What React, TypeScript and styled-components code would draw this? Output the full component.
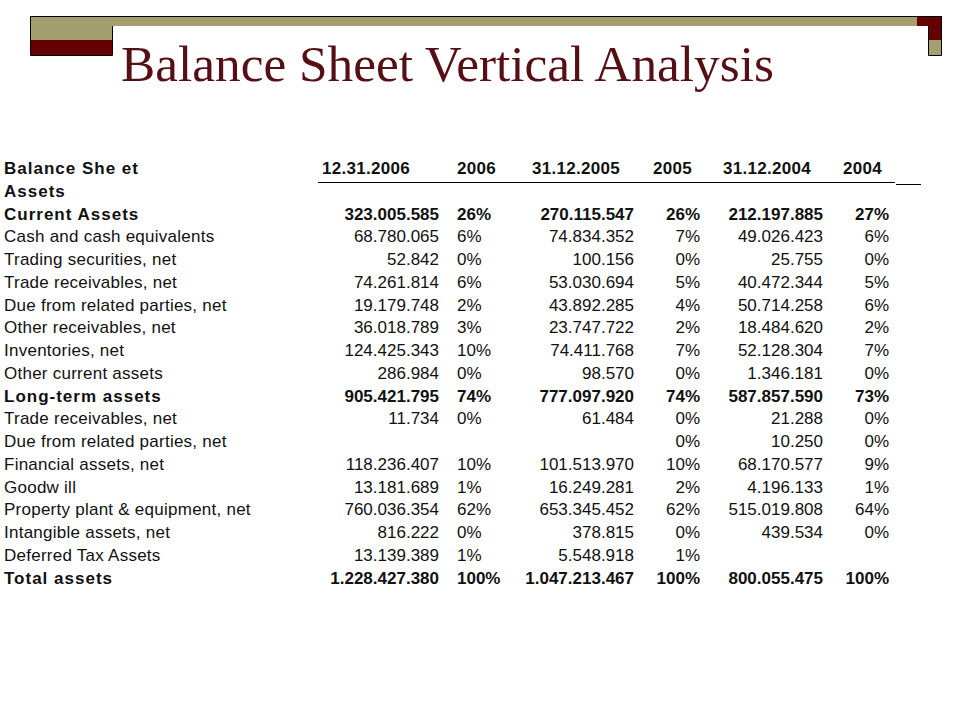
import React from "react";
import styled, { createGlobalStyle } from "styled-components";

const GlobalStyle = createGlobalStyle`
  html, body {
    margin: 0;
    padding: 0;
    background: #ffffff;
  }
`;

const ROW_H = 22.78;
const COLUMNS = "314px 121px 81px 114px 66px 123px 72px 26px";

const Slide = styled.div`
  width: 960px;
  height: 720px;
  background: #ffffff;
  overflow: hidden;
`;

const Header = styled.header`
  position: relative;
  height: 158px;
  box-sizing: border-box;
  padding: 37.5px 0 0 121px;
`;

const Decoration = styled.svg`
  position: absolute;
  top: 0;
  left: 0;
  pointer-events: none;
`;

const Title = styled.h1`
  position: relative;
  margin: 0;
  font-family: "Liberation Serif", "Times New Roman", serif;
  font-weight: normal;
  font-size: 51.3px;
  line-height: 1;
  color: #560f14;
  white-space: nowrap;
`;

const Table = styled.section`
  display: flex;
  flex-direction: column;
  margin-left: 4px;
  font-family: "Liberation Sans", Arial, sans-serif;
  font-size: 17px;
  color: #111111;
`;

const Row = styled.div<{ $bold?: boolean }>`
  display: grid;
  grid-template-columns: ${COLUMNS};
  height: ${ROW_H}px;
  line-height: ${ROW_H}px;
  font-weight: ${(p) => (p.$bold ? 700 : 400)};
  white-space: nowrap;
`;

const LabelCell = styled.span<{ $bold?: boolean }>`
  letter-spacing: ${(p) => (p.$bold ? "1px" : "0.25px")};
`;

const AmountCell = styled.span`
  text-align: right;
`;

const ShareCell = styled.span<{ $lead?: boolean; $tail?: boolean }>`
  text-align: ${(p) => (p.$lead ? "left" : "right")};
  padding-left: ${(p) => (p.$lead ? "18px" : "0")};
  padding-right: ${(p) => (p.$tail ? "6px" : "0")};
`;

const HeadCell = styled.span<{ $inset: number }>`
  box-sizing: border-box;
  height: calc(100% + 1px);
  padding-left: ${(p) => p.$inset}px;
  border-bottom: 1px solid #000000;
  letter-spacing: 0.3px;
`;

const HeadTick = styled.span`
  box-sizing: border-box;
  height: calc(100% + 3px);
  margin-left: 1px;
  border-bottom: 1px solid #000000;
`;

type Line = {
  label: string;
  bold?: boolean;
  values?: [string, string, string, string, string, string];
};

const lines: Line[] = [
  { label: "Assets", bold: true },
  { label: "Current Assets", bold: true, values: ["323.005.585", "26%", "270.115.547", "26%", "212.197.885", "27%"] },
  { label: "Cash and cash equivalents", values: ["68.780.065", "6%", "74.834.352", "7%", "49.026.423", "6%"] },
  { label: "Trading securities, net", values: ["52.842", "0%", "100.156", "0%", "25.755", "0%"] },
  { label: "Trade receivables, net", values: ["74.261.814", "6%", "53.030.694", "5%", "40.472.344", "5%"] },
  { label: "Due from related parties, net", values: ["19.179.748", "2%", "43.892.285", "4%", "50.714.258", "6%"] },
  { label: "Other receivables, net", values: ["36.018.789", "3%", "23.747.722", "2%", "18.484.620", "2%"] },
  { label: "Inventories, net", values: ["124.425.343", "10%", "74.411.768", "7%", "52.128.304", "7%"] },
  { label: "Other current assets", values: ["286.984", "0%", "98.570", "0%", "1.346.181", "0%"] },
  { label: "Long-term assets", bold: true, values: ["905.421.795", "74%", "777.097.920", "74%", "587.857.590", "73%"] },
  { label: "Trade receivables, net", values: ["11.734", "0%", "61.484", "0%", "21.288", "0%"] },
  { label: "Due from related parties, net", values: ["", "", "", "0%", "10.250", "0%"] },
  { label: "Financial assets, net", values: ["118.236.407", "10%", "101.513.970", "10%", "68.170.577", "9%"] },
  { label: "Goodw ill", values: ["13.181.689", "1%", "16.249.281", "2%", "4.196.133", "1%"] },
  { label: "Property plant & equipment, net", values: ["760.036.354", "62%", "653.345.452", "62%", "515.019.808", "64%"] },
  { label: "Intangible assets, net", values: ["816.222", "0%", "378.815", "0%", "439.534", "0%"] },
  { label: "Deferred Tax Assets", values: ["13.139.389", "1%", "5.548.918", "1%", "", ""] },
  { label: "Total assets", bold: true, values: ["1.228.427.380", "100%", "1.047.213.467", "100%", "800.055.475", "100%"] },
];

const heads: { text: string; inset: number }[] = [
  { text: "12.31.2006", inset: 4 },
  { text: "2006", inset: 18 },
  { text: "31.12.2005", inset: 12 },
  { text: "2005", inset: 19 },
  { text: "31.12.2004", inset: 23 },
  { text: "2004", inset: 20 },
];

const OLIVE = "#a39f6e";
const MAROON = "#660000";

function Banner() {
  return (
    <Decoration width={960} height={60} viewBox="0 0 960 60" aria-hidden="true">
      <path d="M30 16 H917 V26 H112 V40 H30 Z" fill={OLIVE} />
      <rect x={30} y={40} width={82} height={15} fill={MAROON} />
      <path d="M917 16 H942 V40 H928 V26 H917 Z" fill={MAROON} />
      <rect x={928} y={40} width={14} height={15} fill={OLIVE} />
      <path
        d="M112.5 26 V55.5 H30.5 V16.5 H941.5 V55.5 H928.5 V26"
        fill="none"
        stroke="#000000"
        strokeWidth={1}
      />
    </Decoration>
  );
}

export default function App() {
  return (
    <>
      <GlobalStyle />
      <Slide>
        <Header>
          <Banner />
          <Title>Balance Sheet Vertical Analysis</Title>
        </Header>
        <Table>
          <Row $bold>
            <LabelCell $bold>Balance She et</LabelCell>
            {heads.map((h) => (
              <HeadCell key={h.text} $inset={h.inset}>
                {h.text}
              </HeadCell>
            ))}
            <HeadTick />
          </Row>
          {lines.map((line, i) => {
            const v = line.values ?? ["", "", "", "", "", ""];
            return (
              <Row key={i} $bold={line.bold}>
                <LabelCell $bold={line.bold}>{line.label}</LabelCell>
                <AmountCell>{v[0]}</AmountCell>
                <ShareCell $lead>{v[1]}</ShareCell>
                <AmountCell>{v[2]}</AmountCell>
                <ShareCell>{v[3]}</ShareCell>
                <AmountCell>{v[4]}</AmountCell>
                <ShareCell $tail>{v[5]}</ShareCell>
              </Row>
            );
          })}
        </Table>
      </Slide>
    </>
  );
}
